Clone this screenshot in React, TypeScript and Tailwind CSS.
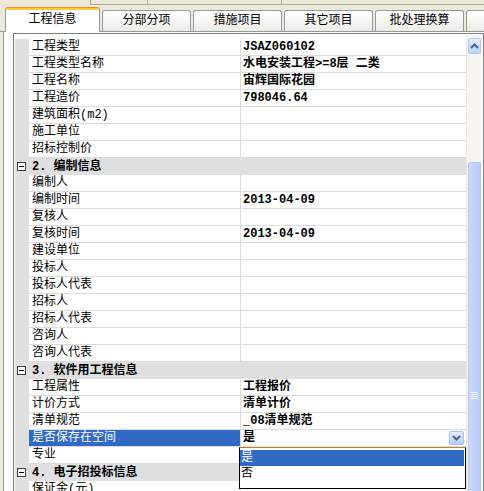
import React from 'react';

type Item = { label?: string; value?: string; section?: string; selected?: boolean; combo?: boolean };

const items: Item[] = [
  { label: '工程类型', value: 'JSAZ060102' },
  { label: '工程类型名称', value: '水电安装工程>=8层 二类' },
  { label: '工程名称', value: '宙辉国际花园' },
  { label: '工程造价', value: '798046.64' },
  { label: '建筑面积(m2)' },
  { label: '施工单位' },
  { label: '招标控制价' },
  { section: '2. 编制信息' },
  { label: '编制人' },
  { label: '编制时间', value: '2013-04-09' },
  { label: '复核人' },
  { label: '复核时间', value: '2013-04-09' },
  { label: '建设单位' },
  { label: '投标人' },
  { label: '投标人代表' },
  { label: '招标人' },
  { label: '招标人代表' },
  { label: '咨询人' },
  { label: '咨询人代表' },
  { section: '3. 软件用工程信息' },
  { label: '工程属性', value: '工程报价' },
  { label: '计价方式', value: '清单计价' },
  { label: '清单规范', value: '_08清单规范' },
  { label: '是否保存在空间', value: '是', selected: true, combo: true },
  { label: '专业' },
  { section: '4. 电子招投标信息' },
  { label: '保证金(元)' },
];

const tabs = ['分部分项', '措施项目', '其它项目', '批处理换算', ''];

const ComboButton = () => (
  <div className="mr-[2px] flex h-[14px] w-[15px] items-center justify-center rounded-[2px] border border-[#a6bdf2] bg-gradient-to-b from-[#e3ecfd] to-[#b9cdf8]">
    <svg width="9" height="6" viewBox="0 0 9 6">
      <path d="M1 1 L4.5 4.5 L8 1" stroke="#4d6185" strokeWidth="2" fill="none" />
    </svg>
  </div>
);

const Row = ({ item }: { item: Item }) => {
  if (item.section) {
    return (
      <div className="flex h-[17px] items-center bg-[#dfdfdf] font-bold">
        <div className="ml-[2px] flex h-[9px] w-[9px] items-center justify-center border border-[#404040] bg-white">
          <div className="h-px w-[5px] bg-black" />
        </div>
        <span className="ml-[6px]">{item.section}</span>
      </div>
    );
  }
  return (
    <div className="flex h-[17px]">
      <div className="w-[14px] shrink-0 bg-[#dfdfdf]" />
      <div
        className={`w-[212px] shrink-0 border-r border-b border-[#dcdcdc] pl-[3px] ${
          item.selected ? 'bg-[#316ac5] text-white' : 'bg-white'
        }`}
      >
        {item.label}
      </div>
      <div className="flex flex-1 items-center justify-between border-b border-[#dcdcdc] bg-white pl-[2px] font-bold">
        <span>{item.value}</span>
        {item.combo && <ComboButton />}
      </div>
    </div>
  );
};

export default function App() {
  return (
    <div className="relative h-[491px] w-[484px] overflow-hidden bg-[#ece9d8] text-[12px] leading-[16px] text-black font-['Liberation_Mono','Noto_Sans_CJK_SC',monospace]">
      {/* toolbar remnant */}
      <div className="flex h-[8px]">
        <div className="w-[90px]" />
        <div className="flex h-[5px] flex-1 border-b border-l border-[#aca899]">
          <div className="w-[57px] border-r border-[#aca899]" />
          <div className="w-[134px] border-r border-[#aca899]" />
        </div>
      </div>

      {/* tabs */}
      <div className="flex h-[24px] items-end gap-[2px] border-b border-[#919b9c] pl-[5px]">
        <div className="relative z-10 -mb-px flex h-[25px] w-[95px] shrink-0 flex-col rounded-t-[3px] border-x border-t border-[#e68b2c] border-x-[#919b9c] bg-white">
          <div className="h-[2px] bg-[#ffc73c]" />
          <div className="flex flex-1 items-center justify-center pb-[2px]">工程信息</div>
        </div>
        {tabs.map((t, i) => (
          <div
            key={i}
            className="flex h-[21px] w-[89px] shrink-0 items-center justify-center rounded-t-[3px] border-x border-t border-[#919b9c] bg-gradient-to-b from-white to-[#ecebe5]"
          >
            {t}
          </div>
        ))}
      </div>

      {/* panel */}
      <div className="ml-[3px] flex h-[500px] border-l border-[#919b9c] bg-[#fcfcfe] pt-px pl-[9px]">
        <div className="flex flex-1 flex-col border border-[#7f7f7f] bg-white p-px">
          <div className="flex">
            <div className="flex w-[451px] flex-col pt-[4px]">
              {items.map((it, i) => (
                <Row key={i} item={it} />
              ))}
            </div>

            {/* scrollbar */}
            <div className="flex w-[16px] flex-col border-l border-[#ece9d8] bg-[#f6f5f0] pt-[3px]">
              <div className="mx-px flex h-[16px] items-center justify-center rounded-[2px] border border-[#b4c8f6] bg-gradient-to-b from-[#e3ecfd] to-[#bfd1fa]">
                <svg width="9" height="6" viewBox="0 0 9 6">
                  <path d="M1 5 L4.5 1.5 L8 5" stroke="#4d6185" strokeWidth="2" fill="none" />
                </svg>
              </div>
              <div className="h-[108px]" />
              <div className="mx-px flex h-[470px] flex-col items-center rounded-[2px] border border-[#b1c7f5] bg-gradient-to-r from-[#c9d9fc] to-[#b5cbf8]">
                <div className="mt-[229px] flex w-[7px] flex-col gap-px">
                  <div className="h-px bg-[#eef3fe]" />
                  <div className="h-px bg-[#eef3fe]" />
                  <div className="h-px bg-[#eef3fe]" />
                  <div className="h-px bg-[#eef3fe]" />
                </div>
              </div>
            </div>
          </div>
        </div>
      </div>

      {/* dropdown list */}
      <div className="absolute top-[447px] left-[239px] h-[42px] w-[227px] border border-black border-t-[#c08030] border-t-dotted bg-white">
        <div className="mt-[2px] mr-px h-[16px] bg-[#316ac5] pl-px text-white">是</div>
        <div className="pl-px">否</div>
      </div>
    </div>
  );
}
